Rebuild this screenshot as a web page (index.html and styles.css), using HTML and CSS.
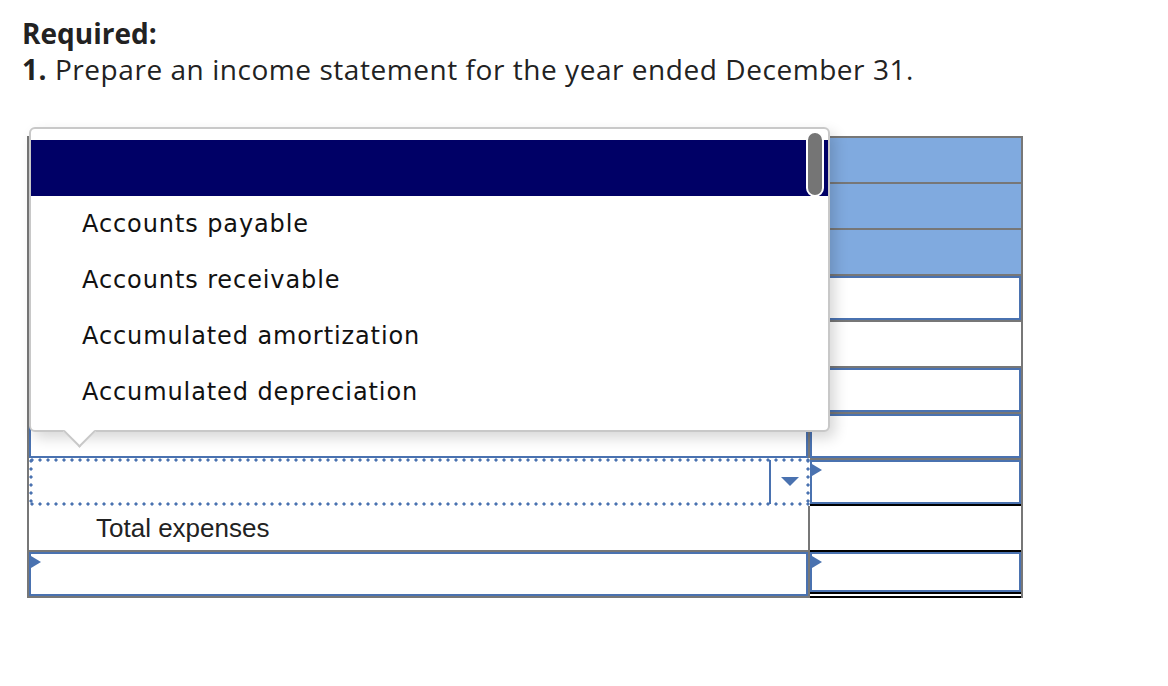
FILE: index.html
```html
<!DOCTYPE html>
<html>
<head>
<meta charset="utf-8">
<link rel="stylesheet" href="styles.css">
</head>
<body>
<div class="page">
  <div class="req">
    <p class="line bold">Required:</p>
    <p class="line wide"><b>1.</b> Prepare an income statement for the year ended December 31.</p>
  </div>
  <div class="sheet-wrap">
    <div class="sheet">
      <div class="cell"></div><div class="cell blue"></div>
      <div class="cell"></div><div class="cell blue"></div>
      <div class="cell"></div><div class="cell blue"></div>
      <div class="cell"><div class="inp"></div></div><div class="cell"><div class="inp"></div></div>
      <div class="cell"></div><div class="cell"></div>
      <div class="cell"><div class="inp"></div></div><div class="cell"><div class="inp"></div></div>
      <div class="cell"><div class="inp"></div></div><div class="cell"><div class="inp"></div></div>
      <div class="cell"><div class="select"><div class="sel-btn"><span class="caret"></span></div></div></div><div class="cell"><div class="inp"><span class="flag"></span></div></div>
      <div class="cell label">Total expenses</div><div class="cell total"></div>
      <div class="cell"><div class="inp"><span class="flag"></span></div></div><div class="cell dbl"><div class="inp short"><span class="flag"></span></div></div>
    </div>
    <div class="popup">
      <div class="opt selected"></div>
      <div class="opt">Accounts payable</div>
      <div class="opt">Accounts receivable</div>
      <div class="opt">Accumulated amortization</div>
      <div class="opt">Accumulated depreciation</div>
      <div class="thumb"></div>
      <div class="tail"></div>
    </div>
  </div>
</div>
</body>
</html>
```

FILE: styles.css
```css
html, body {
  margin: 0;
  padding: 0;
  background: #fff;
}
.page {
  padding: 15px 0 0 22px;
}
.req {
  font-family: "Open Sans", Lato, sans-serif;
  font-size: 28px;
  line-height: 36px;
  color: #222;
}
.line {
  margin: 0;
}
.line.wide {
  letter-spacing: 0.55px;
}
.bold, .line b {
  font-weight: 700;
}
.sheet-wrap {
  position: relative;
  margin: 49px 0 0 5px;
  width: 996px;
}
.sheet {
  display: grid;
  grid-template-columns: 779px 211px;
  grid-auto-rows: 44px;
  gap: 2px;
  padding: 2px;
  background: #777;
  width: fit-content;
}
.cell {
  background: #fff;
  position: relative;
  box-sizing: border-box;
}
.cell.blue {
  background: #80aadf;
}
.inp {
  box-sizing: border-box;
  height: 100%;
  border: 2px solid #4a72b0;
  background: #fff;
  position: relative;
}
.flag {
  position: absolute;
  left: 0;
  top: 2px;
  width: 0;
  height: 0;
  border-top: 6px solid transparent;
  border-bottom: 6px solid transparent;
  border-left: 10px solid #4a72b0;
}
.select {
  box-sizing: border-box;
  height: 48px;
  margin: -2px -2px 0 0;
  padding: 2px 0 2px 0;
  background:
    radial-gradient(circle at 3px 2px, #4a72b0 1.3px, rgba(74,114,176,0) 1.9px) left top / 8px 4px repeat-x,
    radial-gradient(circle at 3px 2px, #4a72b0 1.3px, rgba(74,114,176,0) 1.9px) left bottom / 8px 4px repeat-x,
    radial-gradient(circle at 2px 3px, #4a72b0 1.3px, rgba(74,114,176,0) 1.9px) left top / 4px 8px repeat-y,
    radial-gradient(circle at 2px 3px, #4a72b0 1.3px, rgba(74,114,176,0) 1.9px) right top / 4px 8px repeat-y,
    #fff;
  display: flex;
  justify-content: flex-end;
  position: relative;
  z-index: 1;
}
.sel-btn {
  width: 37px;
  margin-right: 2px;
  border-left: 2px solid #4a72b0;
  display: flex;
  align-items: center;
  justify-content: center;
}
.caret {
  width: 0;
  height: 0;
  border-left: 9px solid transparent;
  border-right: 9px solid transparent;
  border-top: 9px solid #4a72b0;
  margin-top: -1px;
}
.label {
  font-family: "Liberation Sans", Arial, sans-serif;
  font-size: 26px;
  line-height: 44px;
  color: #222;
  padding-left: 67px;
}
.total {
  box-shadow: 0 -2px 0 #000, 0 2px 0 #000;
}
.dbl {
  box-shadow: 0 2px 0 #000;
}
.inp.short {
  height: 40px;
  box-shadow: 0 2px 0 #000;
}
.popup {
  position: absolute;
  left: 2px;
  top: -9px;
  width: 801px;
  height: 305px;
  box-sizing: border-box;
  border: 2px solid #c8c8c8;
  border-radius: 6px;
  background: #fff;
  padding: 11px 0 0 0;
  box-shadow: 5px 6px 14px rgba(0, 0, 0, 0.16);
  z-index: 5;
  font-family: "DejaVu Sans", Verdana, sans-serif;
  font-size: 24px;
  letter-spacing: 0.9px;
  color: #111;
}
.opt {
  height: 56px;
  line-height: 56px;
  padding-left: 51px;
  white-space: nowrap;
}
.opt.selected {
  background: #000066;
}
.thumb {
  position: absolute;
  left: 775px;
  top: 2px;
  width: 14px;
  height: 62px;
  border: 2px solid #fff;
  border-radius: 9px;
  background: #757575;
}
.tail {
  position: absolute;
  left: 37px;
  bottom: -13px;
  width: 21px;
  height: 21px;
  background: #fff;
  border-right: 2px solid #c8c8c8;
  border-bottom: 2px solid #c8c8c8;
  transform: rotate(45deg);
}
```
